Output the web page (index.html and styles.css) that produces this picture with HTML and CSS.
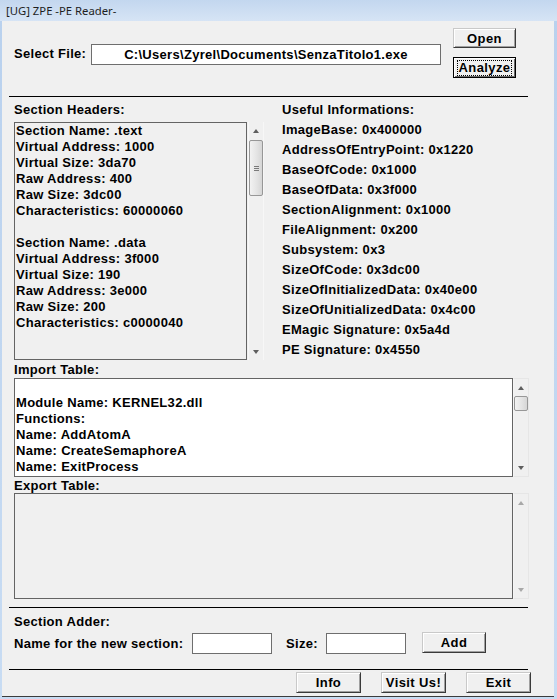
FILE: index.html
```html
<!DOCTYPE html>
<html>
<head>
<meta charset="utf-8">
<title>[UG] ZPE -PE Reader-</title>
<link rel="stylesheet" href="styles.css">
</head>
<body>
<div class="window">
  <div class="titlebar">[UG] ZPE -PE Reader-</div>
  <div class="client">
    <div class="file-row">
      <span class="lbl file-lbl">Select File:</span>
      <div class="edit path">C:\Users\Zyrel\Documents\SenzaTitolo1.exe</div>
      <div class="btn-col">
        <button class="btn btn-open">Open</button>
        <button class="btn btn-default"><span class="focus">Analyze</span></button>
      </div>
    </div>
    <div class="sep"></div>
    <div class="middle">
      <div class="left-col">
        <div class="lbl sh-lbl">Section Headers:</div>
        <div class="scrollbox sh-box">
          <div class="tbox readonly">
            <div>Section Name: .text</div>
            <div>Virtual Address: 1000</div>
            <div>Virtual Size: 3da70</div>
            <div>Raw Address: 400</div>
            <div>Raw Size: 3dc00</div>
            <div>Characteristics: 60000060</div>
            <div>&nbsp;</div>
            <div>Section Name: .data</div>
            <div>Virtual Address: 3f000</div>
            <div>Virtual Size: 190</div>
            <div>Raw Address: 3e000</div>
            <div>Raw Size: 200</div>
            <div>Characteristics: c0000040</div>
          </div>
          <div class="vscroll gap">
            <div class="arrow-cell"><span class="arr-up"></span></div>
            <div class="track"><div class="thumb thumb-sh"><span class="grip"></span></div></div>
            <div class="arrow-cell"><span class="arr-down"></span></div>
          </div>
        </div>
      </div>
      <div class="info-col">
        <div>Useful Informations:</div>
        <div>ImageBase: 0x400000</div>
        <div>AddressOfEntryPoint: 0x1220</div>
        <div>BaseOfCode: 0x1000</div>
        <div>BaseOfData: 0x3f000</div>
        <div>SectionAlignment: 0x1000</div>
        <div>FileAlignment: 0x200</div>
        <div>Subsystem: 0x3</div>
        <div>SizeOfCode: 0x3dc00</div>
        <div>SizeOfInitializedData: 0x40e00</div>
        <div>SizeOfUnitializedData: 0x4c00</div>
        <div>EMagic Signature: 0x5a4d</div>
        <div>PE Signature: 0x4550</div>
      </div>
    </div>
    <div class="lbl it-lbl">Import Table:</div>
    <div class="scrollbox wide it-box">
      <div class="tbox white">
        <div>&nbsp;</div>
        <div>Module Name: KERNEL32.dll</div>
        <div>Functions:</div>
        <div>Name: AddAtomA</div>
        <div>Name: CreateSemaphoreA</div>
        <div>Name: ExitProcess</div>
      </div>
      <div class="vscroll framed">
        <div class="arrow-cell"><span class="arr-up"></span></div>
        <div class="track"><div class="thumb thumb-it"></div></div>
        <div class="arrow-cell"><span class="arr-down"></span></div>
      </div>
    </div>
    <div class="lbl et-lbl">Export Table:</div>
    <div class="scrollbox wide et-box">
      <div class="tbox readonly"></div>
      <div class="vscroll framed disabled">
        <div class="arrow-cell"><span class="arr-up"></span></div>
        <div class="track"></div>
        <div class="arrow-cell"><span class="arr-down"></span></div>
      </div>
    </div>
    <div class="sep sep-2"></div>
    <div class="lbl adder-lbl">Section Adder:</div>
    <div class="adder-row">
      <span class="lbl name-lbl">Name for the new section:</span>
      <div class="edit small"></div>
      <span class="lbl size-lbl">Size:</span>
      <div class="edit small"></div>
      <button class="btn btn-add">Add</button>
    </div>
    <div class="sep sep-3"></div>
    <div class="bottom-row">
      <button class="btn btn-foot">Info</button>
      <button class="btn btn-foot">Visit Us!</button>
      <button class="btn btn-foot">Exit</button>
    </div>
  </div>
</div>
</body>
</html>
```

FILE: styles.css
```css
html, body {
  margin: 0;
  padding: 0;
}
body {
  width: 557px;
  height: 699px;
  overflow: hidden;
  font-family: "Liberation Sans", Arial, sans-serif;
  font-weight: bold;
  font-size: 13px;
  letter-spacing: 0.3px;
  color: #000;
}
.window {
  width: 557px;
  height: 699px;
  box-sizing: border-box;
  background: linear-gradient(#b9d1ee, #c8dcf3);
  display: flex;
  flex-direction: column;
}
.titlebar {
  height: 21px;
  flex: none;
  display: flex;
  align-items: center;
  padding-left: 6px;
  font-family: "Noto Sans", "Open Sans", sans-serif;
  font-weight: normal;
  font-size: 11.3px;
  letter-spacing: 0;
  color: #1e1e1e;
  background: linear-gradient(#c3d7ef, #d6e4f5);
}
.client {
  flex: none;
  height: 675px;
  margin-left: 2px;
  width: 552px;
  background: #f0f0f0;
  border-bottom: 1px solid #3c3c3c;
  display: flex;
  flex-direction: column;
}
.lbl {
  line-height: 16px;
  white-space: nowrap;
}
/* file row */
.file-row {
  margin-top: 7px;
  height: 51px;
  display: flex;
  align-items: flex-start;
}
.file-lbl {
  margin-left: 12px;
  width: 77px;
  margin-top: 18px;
}
.edit {
  box-sizing: border-box;
  background: #fff;
  border: 1px solid #6e6e6e;
  line-height: 19px;
  text-align: center;
  white-space: nowrap;
}
.path {
  width: 350px;
  height: 21px;
  margin-top: 16px;
}
.btn-col {
  margin-left: 12px;
  display: flex;
  flex-direction: column;
  gap: 9px;
}
.btn {
  box-sizing: border-box;
  font-family: "Liberation Sans", Arial, sans-serif;
  font-weight: bold;
  font-size: 13px;
  color: #000;
  background: #f0f0f0;
  border: 1px solid;
  border-color: #c9c9c9 #3a3a3a #3a3a3a #c9c9c9;
  box-shadow: inset 1px 1px 0 #fff, inset -1px -1px 0 #a0a0a0;
  padding: 0;
  margin: 0;
  display: flex;
  align-items: center;
  justify-content: center;
  letter-spacing: 0.4px;
}
.btn-open {
  width: 63px;
  height: 20px;
}
.btn-default {
  width: 63px;
  height: 21px;
  border-color: #000;
  box-shadow: inset 1px 1px 0 #fff, inset -1px -1px 0 #6a6a6a;
}
.focus {
  outline: 1px dotted #000;
  outline-offset: 0;
  padding: 0 1px;
  line-height: 14px;
}
.sep {
  margin-left: 7px;
  width: 519px;
  height: 1px;
  background: #000;
  flex: none;
}
.file-row + .sep {
  margin-top: 17px;
}
/* middle */
.middle {
  display: flex;
  height: 263px;
  flex: none;
}
.left-col {
  margin-left: 12px;
  width: 251px;
}
.sh-lbl {
  margin-top: 5px;
}
.scrollbox {
  display: flex;
}
.sh-box {
  margin-top: 4px;
  height: 238px;
}
.tbox {
  box-sizing: border-box;
  border: 1px solid #646464;
  padding-left: 1px;
  line-height: 16px;
  overflow: hidden;
  white-space: nowrap;
}
.readonly {
  background: #f0f0f0;
}
.white {
  background: #fff;
}
.sh-box .tbox {
  width: 233px;
}
.vscroll {
  width: 16px;
  box-sizing: border-box;
  display: flex;
  flex-direction: column;
  background: #f0f0f0;
}
.vscroll.gap {
  margin-left: 1px;
  border-left: 1px solid #f7f7f7;
  border-right: 1px solid #f7f7f7;
}
.vscroll.framed {
  border: 1px solid #e6e6e6;
  border-left-color: #f5f5f5;
}
.arrow-cell {
  height: 17px;
  flex: none;
  display: flex;
  align-items: center;
  justify-content: center;
}
.track {
  flex: 1;
  display: flex;
  flex-direction: column;
  align-items: center;
}
.arr-up {
  width: 0;
  height: 0;
  border-left: 3.5px solid transparent;
  border-right: 3.5px solid transparent;
  border-bottom: 4px solid #5e5e5e;
}
.arr-down {
  width: 0;
  height: 0;
  border-left: 3.5px solid transparent;
  border-right: 3.5px solid transparent;
  border-top: 4px solid #5e5e5e;
}
.disabled .arr-up {
  border-bottom-color: #a8a8a8;
}
.disabled .arr-down {
  border-top-color: #a8a8a8;
}
.thumb {
  box-sizing: border-box;
  width: 14px;
  border: 1px solid #979797;
  border-radius: 2px;
  background: linear-gradient(90deg, #f2f2f2, #e4e4e4 55%, #d6d6d6);
  display: flex;
  align-items: center;
  justify-content: center;
}
.thumb-sh {
  margin-top: 1px;
  height: 56px;
}
.thumb-it {
  margin-top: 0;
  height: 15px;
}
.grip {
  width: 5px;
  height: 5px;
  background: repeating-linear-gradient(#7a7a7a 0 1px, transparent 1px 2px);
}
.info-col {
  margin-left: 17px;
  margin-top: 3px;
  line-height: 20px;
  white-space: nowrap;
}
/* tables */
.it-lbl {
  margin-left: 12px;
  margin-top: 2px;
}
.wide {
  margin-left: 12px;
}
.wide .tbox {
  width: 499px;
}
.it-box {
  height: 99px;
}
.et-lbl {
  margin-left: 12px;
  margin-top: 1px;
  line-height: 15px;
}
.et-box {
  height: 106px;
}
.sep-2 {
  margin-top: 8px;
}
.adder-lbl {
  margin-left: 12px;
  margin-top: 6px;
}
.adder-row {
  margin-top: 3px;
  margin-left: 12px;
  display: flex;
  align-items: center;
  height: 21px;
}
.name-lbl {
  width: 178px;
}
.small {
  width: 80px;
  height: 21px;
}
.size-lbl {
  margin-left: 14px;
  width: 40px;
}
.btn-add {
  margin-left: 16px;
  width: 64px;
  height: 21px;
  margin-top: -2px;
}
.sep-3 {
  margin-top: 15px;
}
.bottom-row {
  margin-top: 2px;
  display: flex;
  justify-content: flex-end;
  gap: 20px;
  padding-right: 23px;
}
.btn-foot {
  width: 65px;
  height: 21px;
}
```
